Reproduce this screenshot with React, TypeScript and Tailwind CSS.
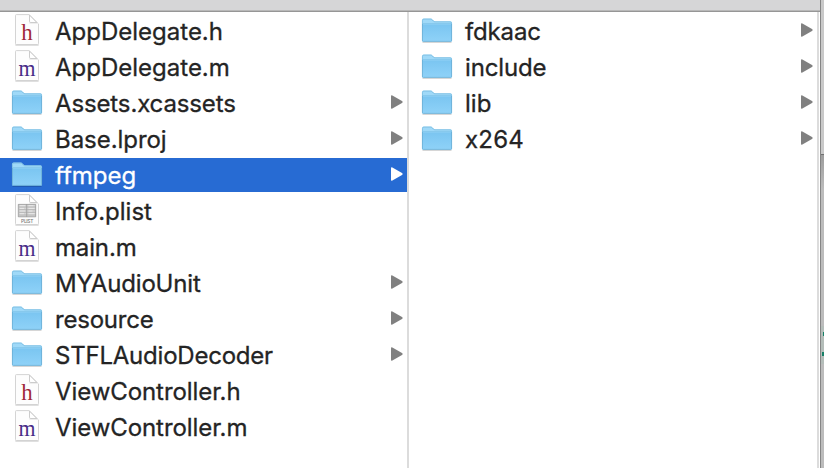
import React from "react";

type Kind = "folder" | "h" | "m" | "plist";
type Entry = { name: string; kind: Kind; tracking?: string; selected?: boolean };

const files: Entry[] = [
  { name: "AppDelegate.h", kind: "h" },
  { name: "AppDelegate.m", kind: "m" },
  { name: "Assets.xcassets", kind: "folder", tracking: "tracking-[-0.13px]" },
  { name: "Base.lproj", kind: "folder", tracking: "tracking-[-0.05px]" },
  { name: "ffmpeg", kind: "folder", selected: true },
  { name: "Info.plist", kind: "plist" },
  { name: "main.m", kind: "m", tracking: "tracking-[-0.15px]" },
  { name: "MYAudioUnit", kind: "folder", tracking: "tracking-[-0.18px]" },
  { name: "resource", kind: "folder", tracking: "tracking-[-0.22px]" },
  { name: "STFLAudioDecoder", kind: "folder", tracking: "tracking-[-0.22px]" },
  { name: "ViewController.h", kind: "h", tracking: "tracking-[-0.08px]" },
  { name: "ViewController.m", kind: "m", tracking: "tracking-[-0.08px]" },
];

const libraries: Entry[] = [
  { name: "fdkaac", kind: "folder", tracking: "tracking-[-0.15px]" },
  { name: "include", kind: "folder", tracking: "tracking-[-0.15px]" },
  { name: "lib", kind: "folder" },
  { name: "x264", kind: "folder", tracking: "tracking-[0.2px]" },
];

function FolderIcon() {
  return (
    <svg width="32" height="34" viewBox="0 0 32 34" className="shrink-0">
      <defs>
        <linearGradient id="folderFront" x1="0" y1="0" x2="0" y2="1">
          <stop offset="0" stopColor="#7ac5f1" />
          <stop offset="1" stopColor="#8fd2f8" />
        </linearGradient>
      </defs>
      <path d="M1.5 28.4h29" stroke="#000" strokeOpacity=".16" strokeWidth="1.2" />
      <path d="M1 6.3q0-1.7 1.6-1.7h7.2q1 0 1.7.8l1 1.2q.6.7 1.6.7h15.3q1.6 0 1.6 1.6V27H1z" fill="#9fd9f8" />
      <path d="M1.4 10V6.5q0-1.4 1.4-1.4h6.9q1 0 1.6.8l1 1.1q.6.8 1.7.8h15.2q1.4 0 1.4 1.4v.8" fill="none" stroke="#76b8dc" strokeWidth=".7" />
      <path d="M1 10h30v16.8q0 1-1 1H2q-1 0-1-1z" fill="url(#folderFront)" />
      <path d="M1.4 10v16.4q0 1 1 1h27.2q1 0 1-1V10" fill="none" stroke="#65a9cf" strokeWidth=".7" />
      <path d="M1.5 9.8h29" stroke="#70b9e4" strokeWidth=".7" />
      <path d="M2 10.6h28" stroke="#91d1f6" strokeWidth=".7" />
    </svg>
  );
}

function DocumentIcon({ kind }: { kind: Kind }) {
  return (
    <svg width="32" height="34" viewBox="0 0 32 34" className="shrink-0">
      <path d="M4.4 31h23.2" stroke="#000" strokeOpacity=".25" strokeWidth="1" />
      <path d="M4.5 1.5q0-.9.9-.9h12.8l9.3 9.3v19.7q0 .9-.9.9H5.4q-.9 0-.9-.9z" fill="#fdfdfd" stroke="#cfcfcf" strokeWidth=".9" />
      <path d="M18.3 1v8.9h8.9z" fill="#eee" />
      <path d="M18.5 1.2v6.1q0 1.2 1.2 1.2h6.1z" fill="#fff" stroke="#c0c0c0" strokeWidth=".8" />
      {kind === "h" && (
        <text x="16" y="26.2" textLength="11.4" lengthAdjust="spacingAndGlyphs" textAnchor="middle" fontFamily="Liberation Serif, serif" fontSize="24" fill="#a0283a">h</text>
      )}
      {kind === "m" && (
        <text x="16" y="26.2" textLength="17" lengthAdjust="spacingAndGlyphs" textAnchor="middle" fontFamily="Liberation Serif, serif" fontSize="24" fill="#472b87">m</text>
      )}
      {kind === "plist" && (
        <>
          <rect x="7" y="10" width="18" height="13" fill="#d4d4d4" />
          <path d="M7.3 10.4h17.4v12.4H7.3zM15.7 10v13" fill="none" stroke="#9c9c9c" strokeWidth=".8" />
          <path d="M8 13h17M8 15.7h17M8 18.3h17M8 21h17" stroke="#a0a0a0" strokeWidth=".6" />
          <path d="M9 11.7h5M17.5 11.7h5M9 14.4h4M17.5 14.4h6M9 17h5M17.5 17h4M9 19.7h4M17.5 19.7h6" stroke="#eeeeee" strokeWidth=".8" />
          <text x="16.2" y="28.8" textLength="12.2" textAnchor="middle" fontFamily="Inter, sans-serif" fontSize="4.8" fontWeight="500" fill="#777">PLIST</text>
        </>
      )}
    </svg>
  );
}

function Row({ entry }: { entry: Entry }) {
  return (
    <div className={`flex h-[34px] items-center pl-[11px] pr-1 ${entry.selected ? "bg-[#276bd3] text-white" : "text-[#242424]"}`}>
      {entry.kind === "folder" ? <FolderIcon /> : <DocumentIcon kind={entry.kind} />}
      <span className={`ml-3 flex-1 pt-0.5 whitespace-nowrap text-[24px] leading-[34px] [-webkit-text-stroke:0.3px_currentColor] ${entry.tracking ?? "tracking-normal"}`}>
        {entry.name}
      </span>
      {entry.kind === "folder" && (
        <svg width="12" height="16" viewBox="0 0 12 16" className="mb-0.5 shrink-0">
          <path d="M0 2.2Q0 .8 1.4 1.5L11 7.1q1.3.9 0 1.8l-9.6 5.6Q0 15.2 0 13.8z" fill={entry.selected ? "#fff" : "#808080"} />
        </svg>
      )}
    </div>
  );
}

export default function App() {
  return (
    <div className="flex h-[468px] w-[824px] overflow-hidden bg-white font-['Inter',sans-serif]">
      <div className="flex w-[820px] flex-col">
        <div className="h-3 shrink-0 border-b border-[#969696] bg-[#d6d6d7]">
          <div className="mt-2.5 h-px bg-[#b8b8b8]" />
        </div>
        <div className="flex flex-1">
          <div className="flex w-[409px] flex-col gap-0.5 border-r-2 border-[#dcdcdc] pt-0.5">
            {files.map((entry) => <Row key={entry.name} entry={entry} />)}
          </div>
          <div className="flex w-[410px] flex-col gap-0.5 border-r-2 border-[#dcdcdc] pt-0.5 pl-px">
            {libraries.map((entry) => <Row key={entry.name} entry={entry} />)}
          </div>
        </div>
      </div>
      <div className="flex w-1 flex-col border-l border-[#858585] bg-[#bcbcbc]">
        <div className="h-[154px] bg-[#c9c9c9]" />
        <div className="h-px bg-[#707070]" />
        <div className="h-[171px] bg-gradient-to-b from-[#9d9d9d] to-[#bcbcbc] to-20%" />
        <div className="flex h-[38px] flex-col items-end bg-[#b4bdb9] pt-1.5">
          <div className="h-1 w-px bg-[#168067]" />
          <div className="mt-4 h-1 w-0.5 bg-[#168067]" />
        </div>
      </div>
    </div>
  );
}
